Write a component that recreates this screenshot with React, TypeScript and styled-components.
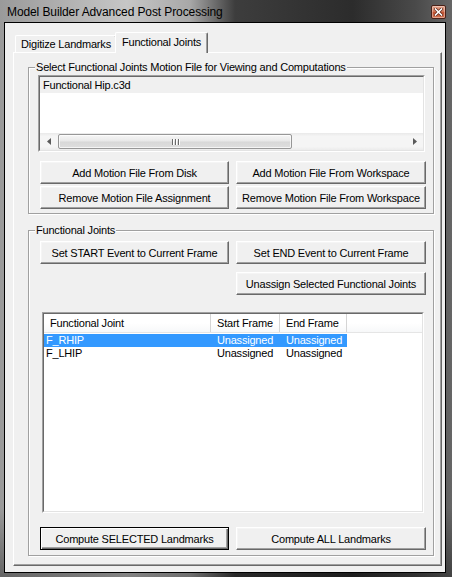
import React from 'react';
import styled, { createGlobalStyle, css } from 'styled-components';

const GlobalStyle = createGlobalStyle`
  * {
    box-sizing: border-box;
  }

  html,
  body {
    margin: 0;
    padding: 0;
    background: #1e1e1e;
  }

  body {
    font-family: "Liberation Sans", Arial, sans-serif;
    font-size: 11px;
    letter-spacing: -0.2px;
    color: #000;
  }
`;

const Window = styled.div`
  width: 452px;
  height: 577px;
  display: flex;
  flex-direction: column;
  padding-bottom: 4px;
  background:
    linear-gradient(to bottom, rgba(0, 0, 0, 0) 88%, rgba(0, 0, 0, 0.35) 100%),
    linear-gradient(
      to right,
      #9a9a9a 0,
      #c6c6c6 28%,
      #a8a8a8 42%,
      #3d3d3d 52%,
      #2c2c2c 78%,
      #4a4a4a 92%,
      #666 100%
    );
`;

const TitleBar = styled.div`
  flex: none;
  height: 22px;
  display: flex;
  align-items: flex-start;
  padding: 0 6px 0 7px;
`;

const Title = styled.div`
  flex: 1;
  padding-top: 5px;
  font-size: 12px;
  letter-spacing: -0.1px;
  line-height: 14px;
  white-space: nowrap;
`;

const CloseButton = styled.button`
  width: 15px;
  height: 14px;
  margin-top: 5px;
  padding: 0;
  display: flex;
  align-items: center;
  justify-content: center;
  border: 1px solid #4a2118;
  border-radius: 2px;
  background: linear-gradient(to bottom, #e3a38a 0, #d0775a 45%, #c1502f 55%, #d47352 100%);
  box-shadow: inset 0 0 0 1px rgba(255, 255, 255, 0.35);
`;

const Client = styled.div`
  flex: 1;
  margin: 0 6px 0 4px;
  border: 1px solid #000;
  background: #f0f0f0;
  padding: 9px 3px 6px 8px;
  display: flex;
  flex-direction: column;
`;

const TabStrip = styled.div`
  height: 20px;
  display: flex;
  align-items: flex-end;
  padding-left: 2px;
`;

const Tab = styled.div<{ $active?: boolean }>`
  position: relative;
  background: #f0f0f0;
  border-top: 1px solid #fff;
  border-left: 1px solid #fff;
  border-right: 1px solid #696969;
  border-radius: 2px 2px 0 0;
  box-shadow: inset -1px 0 0 #a0a0a0;
  white-space: nowrap;
  line-height: 13px;

  ${({ $active }) =>
    $active
      ? css`
          z-index: 1;
          height: 21px;
          margin-left: -2px;
          margin-bottom: -1px;
          padding: 3px 6px 0 6px;
        `
      : css`
          height: 17px;
          padding: 2px 5px 0 5px;
        `}
`;

const TabPanel = styled.div`
  border: 1px solid;
  border-color: #fff #696969 #696969 #fff;
  box-shadow: inset -1px -1px 0 #a0a0a0;
  padding: 8px 7px 9px 14px;
`;

const Group = styled.fieldset<{ $gapTop?: number; $padTop?: number; $padBottom?: number }>`
  margin: ${({ $gapTop }) => $gapTop ?? 0}px 0 0 0;
  min-width: 0;
  border: 1px solid #a0a0a0;
  box-shadow: inset 1px 1px 0 #fff, 1px 1px 0 #fff;
  padding: ${({ $padTop }) => $padTop ?? 1}px 0 ${({ $padBottom }) => $padBottom ?? 4}px 9px;
`;

const Legend = styled.legend`
  margin-left: -3px;
  padding: 0 1px;
  line-height: 13px;
  background: #f0f0f0;
`;

const Sunken = styled.div<{ $width: number; $height: number; $mt?: number; $ml?: number }>`
  width: ${({ $width }) => $width}px;
  height: ${({ $height }) => $height}px;
  margin: ${({ $mt }) => $mt ?? 0}px 0 0 ${({ $ml }) => $ml ?? 0}px;
  border: 1px solid;
  border-color: #a0a0a0 #fff #fff #a0a0a0;
`;

const SunkenInner = styled.div`
  height: 100%;
  border: 1px solid;
  border-color: #696969 #e3e3e3 #e3e3e3 #696969;
  background: #fff;
  display: flex;
  flex-direction: column;
  overflow: hidden;
`;

const ListItems = styled.div`
  flex: 1;
`;

const ListItem = styled.div<{ $selected?: boolean }>`
  height: 16px;
  line-height: 16px;
  padding-left: 3px;
  background: ${({ $selected }) => ($selected ? '#f0f0f0' : 'transparent')};
  white-space: nowrap;
`;

const HScroll = styled.div`
  flex: none;
  height: 17px;
  display: flex;
  align-items: stretch;
  background: linear-gradient(to bottom, #e9e9e9 0, #f5f5f5 20%, #f5f5f5 80%, #ececec 100%);
`;

const ScrollArrow = styled.div`
  flex: none;
  width: 17px;
  display: flex;
  align-items: center;
  justify-content: center;
`;

const ScrollTrack = styled.div`
  flex: 1;
  display: flex;
  align-items: stretch;
  padding: 1px 0;
`;

const ScrollThumb = styled.div<{ $width: number }>`
  width: ${({ $width }) => $width}px;
  margin-left: 1px;
  border: 1px solid #979797;
  border-radius: 2px;
  background: linear-gradient(to bottom, #f6f6f6 0, #e8e8e8 48%, #d8d8d8 52%, #dedede 100%);
  box-shadow: inset 0 0 0 1px rgba(255, 255, 255, 0.7);
  display: flex;
  align-items: center;
  justify-content: center;
  gap: 2px;
`;

const GripLine = styled.span`
  width: 1px;
  height: 6px;
  background: #6a6a6a;
  box-shadow: 1px 0 0 #fff;
`;

const ButtonGrid = styled.div<{ $mt?: number; $rowGap?: number }>`
  display: grid;
  grid-template-columns: 189px 190px;
  column-gap: 7px;
  row-gap: ${({ $rowGap }) => $rowGap ?? 2}px;
  margin: ${({ $mt }) => $mt ?? 0}px 0 0 2px;
`;

const Button = styled.button<{ $default?: boolean; $col?: number }>`
  grid-column: ${({ $col }) => $col ?? 'auto'};
  height: 23px;
  padding: 0 4px;
  font-family: inherit;
  font-size: 11px;
  letter-spacing: -0.2px;
  color: #000;
  background: #f0f0f0;
  border: 1px solid;
  border-color: #fff #696969 #696969 #fff;
  box-shadow: inset -1px -1px 0 #a0a0a0, inset 1px 1px 0 #f5f5f5;
  white-space: nowrap;

  ${({ $default }) =>
    $default &&
    css`
      border-color: #000;
      box-shadow: inset 1px 1px 0 #fff, inset -1px -1px 0 #696969, inset -2px -2px 0 #a0a0a0;
    `}
`;

const HeaderRow = styled.div`
  flex: none;
  height: 19px;
  display: flex;
  background: linear-gradient(to bottom, #fff 0, #fff 50%, #f7f8f9 100%);
  border-bottom: 1px solid #e5e5e5;
`;

const HeaderCell = styled.div<{ $width: number }>`
  width: ${({ $width }) => $width}px;
  flex: none;
  padding-left: 6px;
  line-height: 18px;
  border-right: 1px solid #d5d5d5;
  white-space: nowrap;
`;

const Rows = styled.div`
  flex: 1;
  padding-top: 1px;
`;

const Row = styled.div<{ $selected?: boolean }>`
  width: 303px;
  height: 13px;
  display: flex;
  background: ${({ $selected }) => ($selected ? '#3399ff' : 'transparent')};
  color: ${({ $selected }) => ($selected ? '#fff' : '#000')};
`;

const Cell = styled.div<{ $width: number; $pad: number }>`
  width: ${({ $width }) => $width}px;
  flex: none;
  padding-left: ${({ $pad }) => $pad}px;
  line-height: 13px;
  white-space: nowrap;
`;

const columns = [
  { key: 'name', title: 'Functional Joint', width: 167, pad: 2 },
  { key: 'start', title: 'Start Frame', width: 69, pad: 6 },
  { key: 'end', title: 'End Frame', width: 67, pad: 6 },
] as const;

const joints = [
  { name: 'F_RHIP', start: 'Unassigned', end: 'Unassigned', selected: true },
  { name: 'F_LHIP', start: 'Unassigned', end: 'Unassigned', selected: false },
];

const ArrowLeft = () => (
  <svg width="4" height="7" viewBox="0 0 4 7">
    <path d="M4 0 L0 3.5 L4 7 Z" fill="#5a5a5a" />
  </svg>
);

const ArrowRight = () => (
  <svg width="4" height="7" viewBox="0 0 4 7">
    <path d="M0 0 L4 3.5 L0 7 Z" fill="#5a5a5a" />
  </svg>
);

const CloseGlyph = () => (
  <svg width="9" height="8" viewBox="0 0 9 8">
    <path d="M1.5 1 L7.5 7 M7.5 1 L1.5 7" stroke="#5b2416" strokeWidth="3" strokeLinecap="square" />
    <path d="M1.5 1 L7.5 7 M7.5 1 L1.5 7" stroke="#fff" strokeWidth="1.6" strokeLinecap="square" />
  </svg>
);

export default function App() {
  return (
    <>
      <GlobalStyle />
      <Window>
        <TitleBar>
          <Title>Model Builder Advanced Post Processing</Title>
          <CloseButton aria-label="Close">
            <CloseGlyph />
          </CloseButton>
        </TitleBar>

        <Client>
          <TabStrip>
            <Tab>Digitize Landmarks</Tab>
            <Tab $active>Functional Joints</Tab>
          </TabStrip>

          <TabPanel>
            <Group>
              <Legend>Select Functional Joints Motion File for Viewing and Computations</Legend>
              <Sunken $width={387} $height={77}>
                <SunkenInner>
                  <ListItems>
                    <ListItem $selected>Functional Hip.c3d</ListItem>
                  </ListItems>
                  <HScroll>
                    <ScrollArrow>
                      <ArrowLeft />
                    </ScrollArrow>
                    <ScrollTrack>
                      <ScrollThumb $width={234}>
                        <GripLine />
                        <GripLine />
                        <GripLine />
                      </ScrollThumb>
                    </ScrollTrack>
                    <ScrollArrow>
                      <ArrowRight />
                    </ScrollArrow>
                  </HScroll>
                </SunkenInner>
              </Sunken>

              <ButtonGrid $mt={9}>
                <Button>Add Motion File From Disk</Button>
                <Button>Add Motion File From Workspace</Button>
                <Button>Remove Motion File Assignment</Button>
                <Button>Remove Motion File From Workspace</Button>
              </ButtonGrid>
            </Group>

            <Group $gapTop={10} $padTop={4} $padBottom={5}>
              <Legend>Functional Joints</Legend>
              <ButtonGrid $rowGap={8}>
                <Button>Set START Event to Current Frame</Button>
                <Button>Set END Event to Current Frame</Button>
                <Button $col={2}>Unassign Selected Functional Joints</Button>
              </ButtonGrid>

              <Sunken $width={382} $height={201} $mt={17} $ml={4}>
                <SunkenInner>
                  <HeaderRow>
                    {columns.map((c) => (
                      <HeaderCell key={c.key} $width={c.width}>
                        {c.title}
                      </HeaderCell>
                    ))}
                  </HeaderRow>
                  <Rows>
                    {joints.map((j) => (
                      <Row key={j.name} $selected={j.selected}>
                        {columns.map((c) => (
                          <Cell key={c.key} $width={c.width} $pad={c.pad}>
                            {j[c.key]}
                          </Cell>
                        ))}
                      </Row>
                    ))}
                  </Rows>
                </SunkenInner>
              </Sunken>

              <ButtonGrid $mt={14}>
                <Button $default>Compute SELECTED Landmarks</Button>
                <Button>Compute ALL Landmarks</Button>
              </ButtonGrid>
            </Group>
          </TabPanel>
        </Client>
      </Window>
    </>
  );
}
